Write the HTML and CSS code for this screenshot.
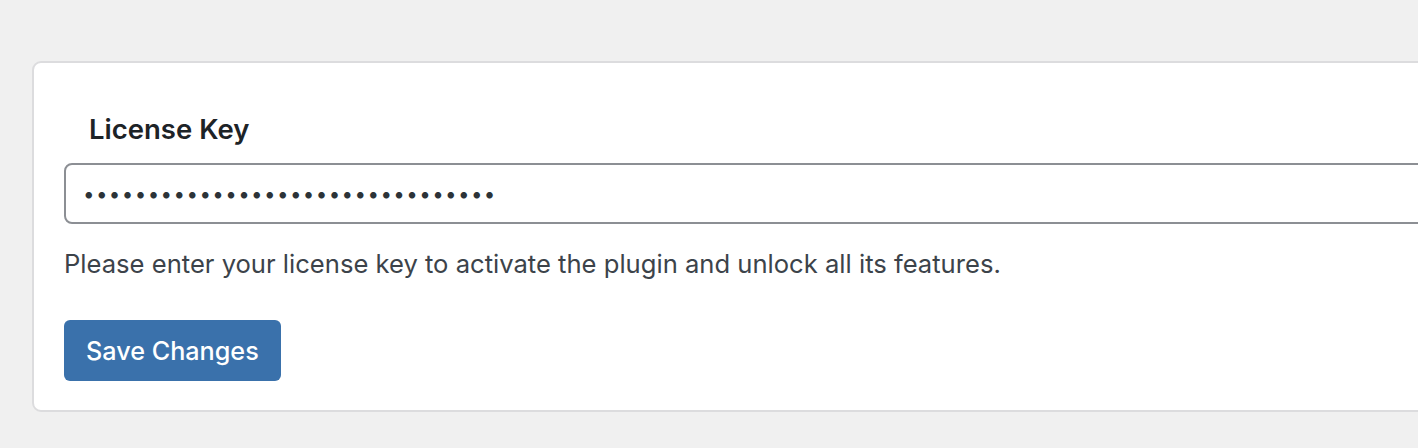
FILE: index.html
```html
<!DOCTYPE html>
<html lang="en">
<head>
<meta charset="utf-8">
<title>License Key</title>
<link rel="stylesheet" href="styles.css">
</head>
<body>
<div class="page">
  <form class="card">
    <label class="field-label" for="license">License Key</label>
    <input class="field-input" id="license" type="password" value="abcdefghijklmnopqrstuvwxyz123456" readonly>
    <p class="field-desc">Please enter your license key to activate the plugin and unlock all its features.</p>
    <button class="btn-primary" type="button">Save Changes</button>
  </form>
</div>
</body>
</html>
```
FILE: styles.css
```css
html, body {
  margin: 0;
  padding: 0;
}
body {
  background: #f0f0f0;
  font-family: Inter, "Noto Sans", "Liberation Sans", sans-serif;
  overflow: hidden;
  width: 1418px;
  height: 448px;
}
.page {
  padding: 61px 0 0 32px;
}
.card {
  box-sizing: border-box;
  width: 1440px;
  height: 351px;
  background: #fff;
  border: 2px solid #dcdcde;
  border-radius: 9px;
  padding: 48px 30px 0 30px;
  display: flex;
  flex-direction: column;
  align-items: flex-start;
}
.field-label {
  display: block;
  margin: 0 0 18px 25px;
  font-size: 27.5px;
  line-height: 36px;
  font-weight: 600;
  color: #1d2327;
}
.field-input {
  box-sizing: border-box;
  width: 1400px;
  height: 61px;
  margin-top: -2px;
  border: 2px solid #8c8f94;
  border-radius: 8px;
  padding: 0 17px;
  font-family: Inter, "Noto Sans", sans-serif;
  font-size: 20.5px;
  letter-spacing: 1.4px;
  color: #2c3338;
  background: #fff;
  outline: none;
}
.field-desc {
  margin: 25px 0 0 0;
  font-size: 25.6px;
  line-height: 30px;
  color: #3c434a;
}
.btn-primary {
  margin-top: 41px;
  height: 61px;
  padding: 0 22px;
  border: none;
  border-radius: 6px;
  background: #3a71ab;
  color: #fff;
  font-family: Inter, "Noto Sans", sans-serif;
  font-size: 25.2px;
  font-weight: 500;
  cursor: pointer;
}
```
